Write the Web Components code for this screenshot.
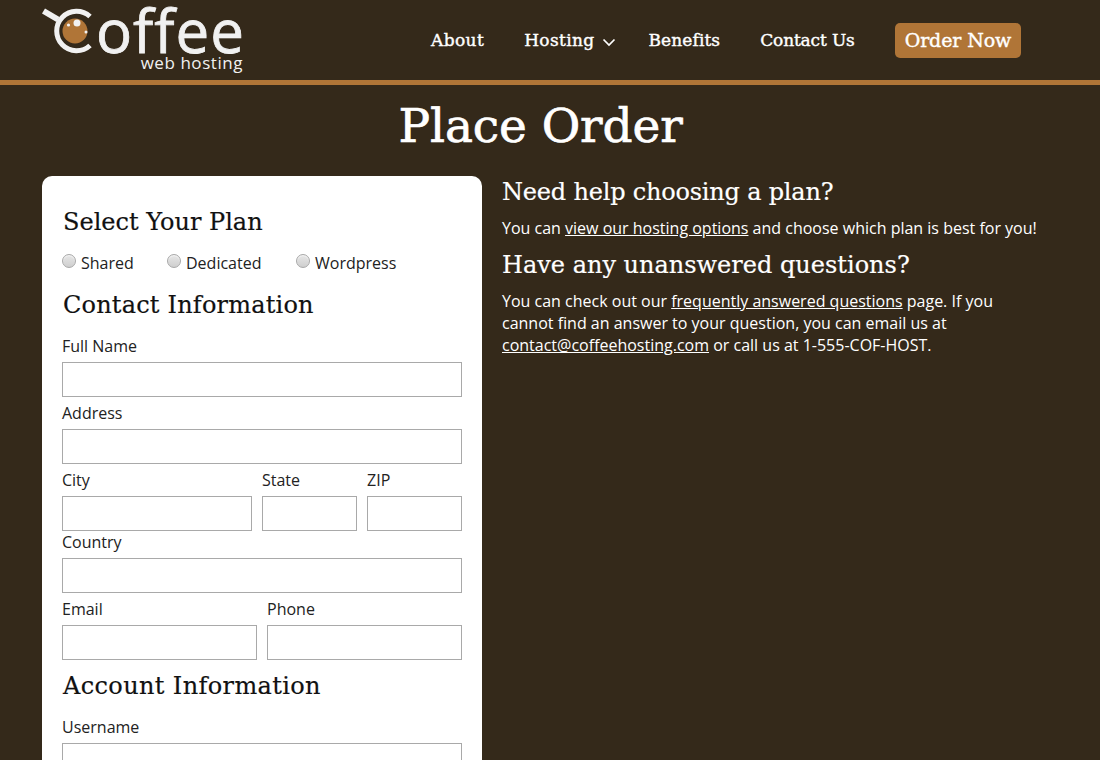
<!DOCTYPE html>
<html>
<head>
<meta charset="utf-8">
<title>Place Order</title>
<style>
html, body { margin: 0; padding: 0; background: #34291a; overflow: hidden; height: 760px; }
body { font-family: "Open Sans", sans-serif; color: #fff; }
</style>
</head>
<body>
<site-header></site-header>
<page-title>Place Order</page-title>
<order-layout>
  <order-form slot="form"></order-form>
  <help-panel slot="help"></help-panel>
</order-layout>

<script>
const SLAB = `"DejaVu Serif", "Liberation Serif", serif`;

class SiteHeader extends HTMLElement {
    constructor() {
        super();
        this.attachShadow({ mode: "open" });
        this.shadowRoot.innerHTML = `
      <style>
      :host { display: block; height: 80px; border-bottom: 5px solid #b07537; }
      .bar { display: flex; align-items: flex-start; height: 80px; padding-left: 42px; }
      .logo { display: block; width: 201px; height: 80px; position: relative; flex: none; }
      .logo svg { position: absolute; left: 0; top: 0; }
      .word { position: absolute; left: 54px; top: 5px; font: 400 60px/50px "Open Sans", sans-serif; letter-spacing: 1px; color: #f1f1f1; -webkit-text-stroke: .8px #f1f1f1; }
      .sub { position: absolute; right: 0; top: 55px; font: 400 17px/15px "Open Sans", sans-serif; color: #f1f1f1; letter-spacing: .55px; }
      nav { display: flex; align-items: center; margin-left: 188px; margin-top: 23px; font: 400 17px/35px ${SLAB}; -webkit-text-stroke: .4px #fff; }
      a { color: #fff; text-decoration: none; white-space: nowrap; }
      nav a { margin-right: 40px; }
      .about { letter-spacing: .4px; }
      .drop { display: flex; align-items: center; margin-right: 33px; letter-spacing: .35px; }
      .drop svg { margin-left: 7px; margin-top: 3px; }
      .benefits { letter-spacing: .1px; }
      .contact { letter-spacing: -.15px; }
      nav .order { margin: 0; background: #b07537; border-radius: 5px; padding: 0 10px; font-size: 19px; letter-spacing: -.1px; height: 35px; }
      </style>
      <div class="bar">
        <div class="logo">
          <svg width="56" height="60" viewBox="0 0 56 60">
            <path d="M1.5 11 L16 19.5" stroke="#f1f1f1" stroke-width="6" fill="none"/>
            <path d="M48 16.5 A19.8 19.8 0 1 0 48 45.5" stroke="#f1f1f1" stroke-width="5" fill="none"/>
            <circle cx="33" cy="31" r="12.5" fill="#b07537"/>
            <circle cx="35" cy="23" r="3.5" fill="#f1f1f1"/>
            <circle cx="26.5" cy="25" r="1.6" fill="#f1f1f1"/>
            <circle cx="44" cy="32" r="1.5" fill="#f1f1f1"/>
          </svg>
          <span class="word">offee</span>
          <span class="sub">web hosting</span>
        </div>
        <nav>
          <a href="#" class="about">About</a>
          <a href="#" class="drop">Hosting<svg width="14" height="9" viewBox="0 0 14 9"><path d="M1.5 1.5 L7 7 L12.5 1.5" stroke="#fff" stroke-width="1.7" fill="none"/></svg></a>
          <a href="#" class="benefits">Benefits</a>
          <a href="#" class="contact">Contact Us</a>
          <a href="#" class="order">Order Now</a>
        </nav>
      </div>`;
    }
}

class PageTitle extends HTMLElement {
    constructor() {
        super();
        this.attachShadow({ mode: "open" });
        this.shadowRoot.innerHTML = `
      <style>
      :host { display: block; text-align: center; height: 91px; padding-right: 19px; }
      h1 { margin: 0; font: 400 47px/82px ${SLAB}; color: #fff; letter-spacing: -.1px; -webkit-text-stroke: .7px #fff; }
      </style>
      <h1><slot></slot></h1>`;
    }
}

class OrderLayout extends HTMLElement {
    constructor() {
        super();
        this.attachShadow({ mode: "open" });
        this.shadowRoot.innerHTML = `
      <style>
      :host { display: block; padding: 0 42px; }
      .cols { display: flex; gap: 20px; align-items: flex-start; }
      </style>
      <div class="cols"><slot name="form"></slot><slot name="help"></slot></div>`;
    }
}

class FormField extends HTMLElement {
    constructor() {
        super();
        this.attachShadow({ mode: "open" });
        this.shadowRoot.innerHTML = `
      <style>
      :host { display: block; min-width: 0; }
      label { display: block; font: 400 16px/22px "Open Sans", sans-serif; color: #222; margin-bottom: 5px; }
      input { display: block; box-sizing: border-box; width: 100%; height: 35px; margin: 0; border: 1px solid #a9a9a9; background: #fff; padding: 0 5px; }
      </style>
      <label></label>
      <input type="text">`;
    }

    connectedCallback() {
        this.shadowRoot.querySelector("label").textContent = this.getAttribute("label");
    }
}

class PlanRadio extends HTMLElement {
    constructor() {
        super();
        this.attachShadow({ mode: "open" });
        this.shadowRoot.innerHTML = `
      <style>
      :host { display: inline-flex; align-items: flex-start; font: 400 16px/22px "Open Sans", sans-serif; color: #222; }
      input { appearance: none; -webkit-appearance: none; box-sizing: border-box; width: 14px; height: 14px; margin: 2px 5px 0 0; border-radius: 50%;
        border: 1px solid #a8a8a8; background: linear-gradient(#e6e6e6, #cfcfcf); box-shadow: inset 0 1px 1px #f6f6f6; }
      </style>
      <input type="radio" name="plan"><slot></slot>`;
    }
}

class OrderForm extends HTMLElement {
    constructor() {
        super();
        this.attachShadow({ mode: "open" });
        this.shadowRoot.innerHTML = `
      <style>
      :host { display: block; box-sizing: border-box; flex: none; width: 440px; background: #fff; border-radius: 10px; padding: 30px 20px 40px; color: #222; }
      h3 { margin: 0; padding-left: 1px; font: 400 24px/32px ${SLAB}; height: 30px; color: #111; -webkit-text-stroke: .2px #111; }
      .select { letter-spacing: 0; }
      .contact { letter-spacing: .2px; }
      .account { letter-spacing: .37px; margin-top: 10px; }
      .plans { display: flex; margin-top: 16px; height: 37px; }
      .plans plan-radio:nth-child(1) { width: 105px; }
      .plans plan-radio:nth-child(2) { width: 129px; }
      .row { display: flex; gap: 10px; }
      .gap { margin-top: 5px; }
      .city { width: 190px; flex: none; }
      .state, .zip { width: 95px; flex: none; }
      .half { flex: 1; }
      .after { margin-top: 16px; }
      </style>
      <h3 class="select">Select Your Plan</h3>
      <div class="plans">
        <plan-radio>Shared</plan-radio>
        <plan-radio>Dedicated</plan-radio>
        <plan-radio>Wordpress</plan-radio>
      </div>
      <h3 class="contact">Contact Information</h3>
      <form-field class="after" label="Full Name"></form-field>
      <form-field class="gap" label="Address"></form-field>
      <div class="row gap">
        <form-field class="city" label="City"></form-field>
        <form-field class="state" label="State"></form-field>
        <form-field class="zip" label="ZIP"></form-field>
      </div>
      <form-field label="Country"></form-field>
      <div class="row gap">
        <form-field class="half" label="Email"></form-field>
        <form-field class="half" label="Phone"></form-field>
      </div>
      <h3 class="account">Account Information</h3>
      <form-field class="after" label="Username"></form-field>`;
    }
}

class HelpPanel extends HTMLElement {
    constructor() {
        super();
        this.attachShadow({ mode: "open" });
        this.shadowRoot.innerHTML = `
      <style>
      :host { display: block; flex: 1; color: #fff; }
      h3 { margin: 0; font: 400 24px/32px ${SLAB}; height: 30px; -webkit-text-stroke: .2px #fff; }
      .need { letter-spacing: -.2px; }
      p { margin: 11px 0 10px; font: 400 16px/22px "Open Sans", sans-serif; width: 540px; }
      p.wrap { width: 520px; }
      a { color: #fff; }
      </style>
      <h3 class="need">Need help choosing a plan?</h3>
      <p>You can <a href="#">view our hosting options</a> and choose which plan is best for you!</p>
      <h3>Have any unanswered questions?</h3>
      <p class="wrap">You can check out our <a href="#">frequently answered questions</a> page. If you cannot find an answer to your question, you can email us at <a href="#">contact@coffeehosting.com</a> or call us at 1-555-COF-HOST.</p>`;
    }
}

customElements.define("site-header", SiteHeader);
customElements.define("page-title", PageTitle);
customElements.define("order-layout", OrderLayout);
customElements.define("form-field", FormField);
customElements.define("plan-radio", PlanRadio);
customElements.define("order-form", OrderForm);
customElements.define("help-panel", HelpPanel);
</script>
</body>
</html>
